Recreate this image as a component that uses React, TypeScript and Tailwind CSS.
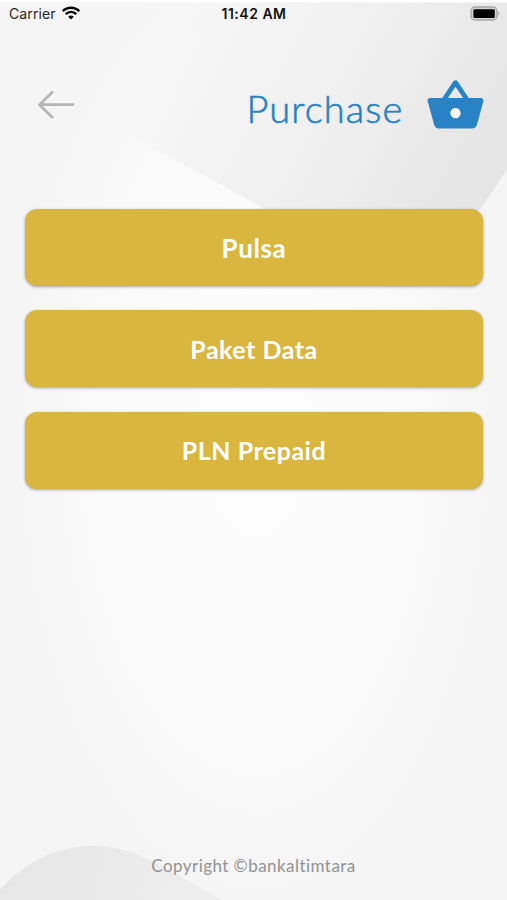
const menuItems = [
  { label: 'Pulsa', spacing: 'text-[26px] tracking-[0.6px]' },
  { label: 'Paket Data', spacing: 'text-[25px] tracking-[0.5px]' },
  { label: 'PLN Prepaid', spacing: 'text-[25px] tracking-[0.5px]' },
];

function Backdrop() {
  return (
    <svg className="absolute inset-0 -z-10" width="507" height="900" viewBox="0 0 507 900" aria-hidden="true">
      <defs>
        <radialGradient id="page" gradientUnits="userSpaceOnUse" cx="0" cy="0" r="1" gradientTransform="translate(255 430) scale(310 610)">
          <stop offset="0" stopColor="#fdfdfd" />
          <stop offset="0.45" stopColor="#fafafa" />
          <stop offset="0.8" stopColor="#f5f5f5" />
          <stop offset="1" stopColor="#f5f5f5" />
        </radialGradient>
        <linearGradient id="wave" gradientUnits="userSpaceOnUse" x1="110" y1="60" x2="440" y2="240">
          <stop offset="0" stopColor="#f6f6f6" stopOpacity="0" />
          <stop offset="0.25" stopColor="#f5f5f5" />
          <stop offset="0.65" stopColor="#eeeeee" />
          <stop offset="1" stopColor="#e5e5e5" />
        </linearGradient>
        <linearGradient id="hill" gradientUnits="userSpaceOnUse" x1="40" y1="860" x2="210" y2="900">
          <stop offset="0" stopColor="#e7e7e7" />
          <stop offset="1" stopColor="#eeeeee" />
        </linearGradient>
      </defs>
      <rect width="507" height="900" fill="url(#page)" />
      <path d="M0 3H507V169Q495 189 480 209C440 250 345 250 265 209C220 184 170 156 110 127C70 105 35 65 0 30Z" fill="url(#wave)" />
      <path d="M0 890C26 862 55 846 94 846C128 846 153 861 180 876Q199 888 223 900H0Z" fill="url(#hill)" />
      <rect width="507" height="2" fill="#ffffff" />
    </svg>
  );
}

function StatusBar() {
  return (
    <div className="grid h-7 grid-cols-[1fr_auto_1fr] items-center pl-[9px] pr-[6px] font-[Inter,sans-serif] text-[14px] leading-5 text-[#242424]">
      <div className="flex items-center gap-[6px]">
        <span className="tracking-[0.1px]">Carrier</span>
        <svg className="-mt-[2px]" width="18" height="14" viewBox="0 0 18 14" fill="none" stroke="#080808" strokeWidth="2.4" aria-hidden="true">
          <path d="M.8 5.2C5.2.6 12.8.6 17.2 5.2" />
          <path d="M3.7 8.2C6.8 5.2 11.2 5.2 14.3 8.2" />
          <path d="M6.1 10.7Q9 8.2 11.9 10.7L9 13.5Z" fill="#080808" stroke="none" />
        </svg>
      </div>
      <span className="relative -left-[1px] whitespace-nowrap text-center font-semibold tracking-[0.5px] text-[#111]">11:42 AM</span>
      <svg className="-mt-[2px] justify-self-end" width="31" height="15" viewBox="0 0 31 15" aria-hidden="true">
        <rect x="1" y="1" width="26" height="13" rx="3.9" fill="#d4d4d4" stroke="#a9a9a9" strokeWidth="1.4" />
        <rect x="3.4" y="3.2" width="21.4" height="8.8" rx="1.3" fill="#000" />
        <path d="M28.3 5.2Q30.7 7.3 28.3 9.7Z" fill="#a7a7a7" />
      </svg>
    </div>
  );
}

export default function App() {
  return (
    <main className="relative isolate flex h-[900px] w-[507px] flex-col overflow-hidden font-[Lato,sans-serif]">
      <Backdrop />
      <StatusBar />
      <header className="flex h-[181px] items-start justify-between pl-[37px] pr-[21.5px] pt-[47px]">
        <button aria-label="Back" className="mt-[15px]">
          <svg className="block" width="38" height="30" viewBox="0 0 38 30" fill="none" stroke="#b5b5b5" strokeWidth="2.8" aria-hidden="true">
            <path d="M37 14.7H2M16 1.5L2.5 14.7L16 28" strokeLinejoin="round" />
          </svg>
        </button>
        <div className="flex items-start gap-[21px]">
          <h1 className="pt-[8px] text-[38px] font-light leading-[50px] tracking-[1.1px] text-[#2882c5] [-webkit-text-stroke:0.6px_#2882c5]">Purchase</h1>
          <svg className="block" width="61" height="61" viewBox="0 0 24 24" fill="#2882c5" aria-hidden="true">
            <circle cx="12" cy="15" r="2.2" fill="#fafafa" />
            <path d="M17.21 9l-4.38-6.56c-.19-.28-.51-.42-.83-.42-.32 0-.64.14-.83.43L6.79 9H2c-.55 0-1 .45-1 1 0 .09.01.18.04.27l2.54 9.27c.23.84 1 1.46 1.92 1.46h13c.92 0 1.69-.62 1.93-1.46l2.54-9.27L23 10c0-.55-.45-1-1-1h-4.79zM9 9l3-4.4L15 9H9zm3 8c-1.1 0-2-.9-2-2s.9-2 2-2 2 .9 2 2-.9 2-2 2z" />
          </svg>
        </div>
      </header>
      <nav className="flex flex-col gap-[24.3px] pl-[25px] pr-6">
        {menuItems.map(({ label, spacing }) => (
          <button
            key={label}
            className={`h-[77px] rounded-[12px] bg-[#d9b640] pt-[1px] font-bold text-white shadow-[0_1px_3px_rgba(0,0,0,0.35)] ${spacing}`}
          >
            {label}
          </button>
        ))}
      </nav>
      <footer className="mt-auto h-[46px] text-center text-[17px] leading-6 tracking-[0.45px] text-[#929292]">
        Copyright ©bankaltimtara
      </footer>
    </main>
  );
}
